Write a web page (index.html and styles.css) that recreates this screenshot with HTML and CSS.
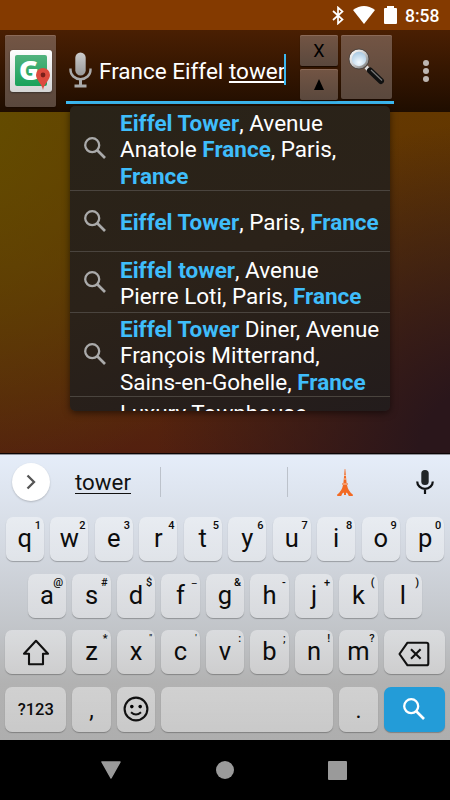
FILE: index.html
```html
<!DOCTYPE html>
<html lang="en">
<head>
<meta charset="utf-8">
<title>France Eiffel tower</title>
<link rel="stylesheet" href="styles.css">
</head>
<body>
<svg width="0" height="0" class="defs">
  <defs>
    <symbol id="search" viewBox="0 0 22 22"><circle cx="8.2" cy="8.2" r="7" fill="none" stroke="currentColor" stroke-width="2.3"/><path d="M13 13L21 21" stroke="currentColor" stroke-width="2.6"/></symbol>
    <linearGradient id="silver" x1="0" y1="0" x2="0" y2="1"><stop offset="0" stop-color="#ccc"/><stop offset="1" stop-color="#999"/></linearGradient>
    <radialGradient id="lens" cx=".5" cy=".7" r=".7"><stop offset="0" stop-color="#f5fbff"/><stop offset="1" stop-color="#9fc3df"/></radialGradient>
    <linearGradient id="rim" x1="0" y1="0" x2="1" y2="1"><stop offset="0" stop-color="#fff"/><stop offset=".5" stop-color="#ccc"/><stop offset="1" stop-color="#777"/></linearGradient>
  </defs>
</svg>
<div class="phone">
  <header class="status">
    <svg width="12" height="19" viewBox="0 0 12 19"><path d="M1 5L10.5 13.5L6 17.5V1.5L10.5 5.5L1 14" fill="none" stroke="#fff" stroke-width="1.7"/></svg>
    <svg class="wifi" width="22" height="18" viewBox="0 0 22 18"><path d="M0 4Q11-4 22 4L11 18Z" fill="#fff"/></svg>
    <svg class="battery" width="13" height="18" viewBox="0 0 13 18"><path d="M3 0h7v2h2q1 0 1 1v14q0 1-1 1H1q-1 0-1-1V3q0-1 1-1h2z" fill="#fff"/></svg>
    <span class="clock">8:58</span>
  </header>
  <div class="toolbar">
    <div class="tile app">
      <div class="logo"><div class="logo-g">G</div>
        <svg class="pin" width="14" height="22" viewBox="0 0 14 22"><path d="M7 22C6 16 0 12 0 7a7 7 0 0 1 14 0c0 5-6 9-7 15z" fill="#dd4b3e"/><circle cx="7" cy="7" r="2.4" fill="#7a201a"/></svg>
      </div>
    </div>
    <div class="field">
      <div class="query">
        <svg class="mic" width="23" height="36" viewBox="0 0 23 36"><rect x="6.3" y=".5" width="10.4" height="23" rx="5.2" fill="url(#silver)"/><path d="M1.5 16.5v1.5a10 9.2 0 0 0 20 0v-1.5" fill="none" stroke="#aaa" stroke-width="2.4"/><path d="M11.5 27v6M5.5 34h12" stroke="#aaa" stroke-width="3"/></svg>
        <span class="query-text">France Eiffel <span class="composing">tower</span></span><span class="caret"></span>
      </div>
      <div class="stack"><div class="tile small">X</div><div class="tile small">
        <svg width="10" height="11" viewBox="0 0 10 11"><path d="M5 0L10 11H0z" fill="#000"/></svg></div></div>
      <div class="tile go">
        <svg width="40" height="40" viewBox="0 0 40 40"><path d="M19 20L24 25" stroke="#ddd" stroke-width="4"/><path d="M23 23.5L34 34" stroke="#111" stroke-width="6" stroke-linecap="round"/><path d="M24 23L35 33.500" stroke="#777" stroke-width="1.2"/><circle cx="12" cy="12" r="8.500" fill="url(#lens)" stroke="url(#rim)" stroke-width="2.6"/><circle cx="12" cy="12" r="10" fill="none" stroke="#333" stroke-width=".6"/></svg>
      </div>
    </div>
    <div class="dots"><i></i><i></i><i></i></div>
  </div>

  <main class="content">
    <ul class="dropdown">
      <li class="row three"><svg class="mag"><use href="#search"/></svg><p><b>Eiffel Tower</b>, Avenue<br>Anatole <b>France</b>, Paris,<br><b>France</b></p></li>
      <li class="row two"><svg class="mag"><use href="#search"/></svg><p><b>Eiffel Tower</b>, Paris, <b>France</b></p></li>
      <li class="row two"><svg class="mag"><use href="#search"/></svg><p><b>Eiffel tower</b>, Avenue<br>Pierre Loti, Paris, <b>France</b></p></li>
      <li class="row three"><svg class="mag"><use href="#search"/></svg><p><b>Eiffel Tower</b> Diner, Avenue<br>François Mitterrand,<br>Sains-en-Gohelle, <b>France</b></p></li>
      <li class="row last"><p>Luxury Townhouse</p></li>
    </ul>
  </main>

  <section class="keyboard">
    <div class="suggest">
      <div class="more"><svg width="10" height="16" viewBox="0 0 10 16"><path d="M1.5 1.5L8 8L1.5 14.5" fill="none" stroke="#555" stroke-width="2.3"/></svg></div>
      <div class="word"><span>tower</span></div>
      <div class="word mid"></div>
      <div class="word emoji"><svg width="16" height="27" viewBox="0 0 16 27"><path d="M7.7 0h.6l.5 6 .8 8h1v2h-.6q1 6 5.800 9.500V27h-4q-.8-3-2.800-3.400V26H7v-2.400Q5 24 4.200 27h-4v-1.500Q5 22 6 16h-.6v-2h1l.8-8z" fill="#f26a24"/><path d="M5.8 15h4.400M6.900 10h2.200M7.200 6.500h1.600" stroke="#fbd9c5" stroke-width=".9"/></svg></div>
      <svg class="kmic" width="18" height="24" viewBox="0 0 18 24"><rect x="5.300" y="0" width="7.400" height="15" rx="3.500" fill="#222628"/><path d="M1.200 11.500a7.800 7.300 0 0 0 15.600 0M9 18.500V24" fill="none" stroke="#101214" stroke-width="2.200"/></svg>
    </div>
    <div class="keys">
      <div class="key">q<sup>1</sup></div><div class="key">w<sup>2</sup></div><div class="key">e<sup>3</sup></div><div class="key">r<sup>4</sup></div><div class="key">t<sup>5</sup></div><div class="key">y<sup>6</sup></div><div class="key">u<sup>7</sup></div><div class="key">i<sup>8</sup></div><div class="key">o<sup>9</sup></div><div class="key">p<sup>0</sup></div>
    </div>
    <div class="keys">
      <div class="key">a<sup>@</sup></div><div class="key">s<sup>#</sup></div><div class="key">d<sup>$</sup></div><div class="key">f<sup class="line">_</sup></div><div class="key">g<sup>&amp;</sup></div><div class="key">h<sup>-</sup></div><div class="key">j<sup>+</sup></div><div class="key">k<sup>(</sup></div><div class="key">l<sup>)</sup></div>
    </div>
    <div class="keys">
      <div class="key wide"><svg width="28" height="27" viewBox="0 0 28 27"><path d="M14 1.800L26 14.800H21V25.200H7V14.800H2z" fill="none" stroke="#111" stroke-width="2.100" stroke-linejoin="round"/></svg></div>
      <div class="key">z<sup>*</sup></div><div class="key">x<sup class="quote">"</sup></div><div class="key">c<sup class="quote">'</sup></div><div class="key">v<sup>:</sup></div><div class="key">b<sup>;</sup></div><div class="key">n<sup>!</sup></div><div class="key">m<sup>?</sup></div>
      <div class="key wide"><svg class="del" width="32" height="26" viewBox="0 0 32 26"><path d="M9.500 1.700H28.500Q30.300 1.700 30.300 3.500V22.500Q30.300 24.300 28.500 24.300H9.500L1.500 13z" fill="none" stroke="#111" stroke-width="2.100" stroke-linejoin="round"/><path d="M13 8.200L22.600 17.800M22.600 8.200L13 17.800" stroke="#111" stroke-width="2.100"/></svg></div>
    </div>
    <div class="keys bottom">
      <div class="key wide label">?123</div>
      <div class="key punct">,</div>
      <div class="key"><svg width="26" height="26" viewBox="0 0 26 26"><circle cx="13" cy="13" r="11.400" fill="none" stroke="#111" stroke-width="2.100"/><circle cx="8.800" cy="10.600" r="1.800"/><circle cx="17.200" cy="10.600" r="1.800"/><path d="M8 16.200Q13 20.800 18 16.200" fill="none" stroke="#111" stroke-width="2"/></svg></div>
      <div class="key space"></div>
      <div class="key punct">.</div>
      <div class="key wide enter"><svg class="mag"><use href="#search"/></svg></div>
    </div>
  </section>
  <nav class="nav">
    <svg width="20" height="18" viewBox="0 0 20 18"><path d="M1 1H19L10 17z" fill="#9a9a9a" stroke="#9a9a9a" stroke-width="1.500" stroke-linejoin="round"/></svg>
    <span class="home"></span>
    <span class="recent"></span>
  </nav>
</div>
</body>
</html>
```
FILE: styles.css
```css
* { box-sizing: border-box; }
body { margin: 0; font-family: Roboto, "Liberation Sans", sans-serif; }
svg { display: block; flex: none; }
.defs { position: absolute; }
.phone { width: 450px; height: 800px; display: flex; flex-direction: column; overflow: hidden; }

.status { height: 30px; flex: none; background: #843a00; display: flex; align-items: center; justify-content: flex-end; padding-right: 10px; }
.wifi { margin-left: 9px; }
.battery { margin-left: 9px; }
.clock { color: #fff; font-size: 17.500px; font-weight: 500; line-height: 30px; margin-left: 8px; width: 35px; white-space: nowrap; padding-top: 1px; }

.toolbar { height: 82px; flex: none; display: flex; padding: 5px 0 0 5px; background: linear-gradient(#4a1f02, #1f0d00); }
.tile { background: linear-gradient(#735544, #5a483d); border-radius: 2px; box-shadow: inset 0 1px #8b6a58, 0 1px 1px #1a0b00; display: flex; align-items: center; justify-content: center; flex: none; }
.app { width: 51px; height: 72px; }
.logo { width: 42px; height: 42px; border-radius: 3px; background: linear-gradient(#fff, #d5d5d5); padding: 5px; position: relative; box-shadow: 0 1px 2px #2229; }
.logo-g { width: 32px; height: 31px; border-radius: 2px; background: linear-gradient(#52b37f, #19a25a); color: #fff; font: 800 27px/29px "Open Sans", sans-serif; text-align: center; padding-right: 3px; }
.pin { position: absolute; left: 26px; top: 18px; }
.field { margin-left: 10px; width: 328px; height: 69px; border-bottom: 3px solid #3cb8f0; display: flex; }
.query { width: 234px; display: flex; align-items: flex-start; }
.mic { margin: 17px 0 0 3px; }
.query-text { margin: 19px 0 0 7px; color: #fff; font-size: 22.500px; line-height: 34px; white-space: nowrap; }
.composing { text-decoration: underline; text-decoration-thickness: 1.500px; text-underline-offset: 2px; }
.caret { width: 2px; height: 31px; background: #3cb8f0; margin: 19px 0 0 -1px; flex: none; }
.stack { display: flex; flex-direction: column; gap: 3px; width: 38px; }
.small { width: 38px; height: 31px; font-size: 18px; color: #000; }
.go { width: 51px; height: 64px; margin: 0 0 0 3px; }
.dots { margin: 25px 0 0 28.500px; display: flex; flex-direction: column; gap: 2px; }
.dots i { width: 6px; height: 6px; border-radius: 50%; background: #bdb6b1; }

.content { height: 342px; flex: none; padding-left: 70px; border-bottom: 1px solid #0c0505;
  background: radial-gradient(ellipse 330px 330px at 108% 100%, #2a161b 20%, #2a161b00), radial-gradient(ellipse 350px 380px at -8% 0, #634d00, #634d0000), linear-gradient(#643800, #5c3106 45%, #53200f); }
.dropdown { position: relative; margin: -6px 0 0; padding: .500px 0 0; width: 320px; height: 305px; border-radius: 5px; overflow: hidden; list-style: none; background: linear-gradient(160deg, #292318, #2b2219 50%, #231c1c); box-shadow: 0 2px 7px #0008; }
.row { display: flex; align-items: center; border-bottom: 1px solid #4a443e; }
.three { height: 84px; }
.two { height: 61px; }
.last { height: 80px; border: 0; align-items: flex-start; padding-left: 50px; }
.row p { margin: 3px 0 0; color: #fff; font-size: 22.500px; line-height: 26.300px; white-space: nowrap; }
.row b { color: #3fbdfb; font-weight: 700; }
.mag { width: 22px; height: 22px; color: #aaa; flex: none; }
.row .mag { margin: 0 14px 0 14px; }

.keyboard { height: 286px; flex: none; background: linear-gradient(#e5edf9, #d2d7df 35%, #c1c4c8 62%, #b2b2b2 80%, #aeaeae); border-top: 1px solid #92949b; }
.suggest { height: 62px; display: flex; align-items: center; padding: 0 0 8px 12px; }
.more { width: 38px; height: 38px; border-radius: 50%; background: #fff; display: flex; align-items: center; justify-content: center; box-shadow: 0 1px 2px #0003; }
.word { height: 30px; display: flex; align-items: center; justify-content: center; }
.word:nth-child(2) { width: 111px; border-right: 1px solid #bcc2cb; font-size: 22.300px; padding-right: 4px; color: #111; }
.word span { border-bottom: 1.500px solid #111; line-height: 22px; padding-top: 1px; }
.mid { width: 127px; border-right: 1px solid #bcc2cb; }
.emoji { width: 114px; }
.kmic { margin: 0 0 0 14px; }
.keys { display: flex; justify-content: center; gap: 6.200px; height: 44px; margin-bottom: 12.600px; }
.key { width: 38.300px; border-radius: 7px; background: linear-gradient(#fff6, #fff5); box-shadow: 0 1px 1px #0004; display: flex; align-items: center; justify-content: center; font-size: 25.500px; color: #0c0c0c; line-height: 42px; position: relative; padding-bottom: 2px; flex: none; }
.key svg { margin-top: 2px; }
.key .del { margin-top: 5px; }
.key sup { position: absolute; right: 3px; top: 3px; font-size: 11px; line-height: 11px; font-weight: 500; }
.key .line { top: 0; font-weight: 400; }
.key .quote { font-size: 9px; top: 3px; }
.wide { width: 60.800px; }
.bottom { height: 45px; margin: 0; }
.label { font-size: 16.500px; font-weight: 500; padding: 2px 0 0; }
.punct { font-size: 23px; padding: 4px 0 0; }
.space { width: 171.800px; }
.enter { background: #239cd8; }
.enter .mag { color: #fff; }
.nav { flex: 1; background: #000; display: flex; justify-content: space-between; align-items: center; padding: 0 103px 0 101px; }
.home { width: 18px; height: 18px; border-radius: 50%; background: #9a9a9a; margin-left: 1px; }
.recent { width: 19px; height: 19px; border-radius: 1px; background: #9a9a9a; }
```
